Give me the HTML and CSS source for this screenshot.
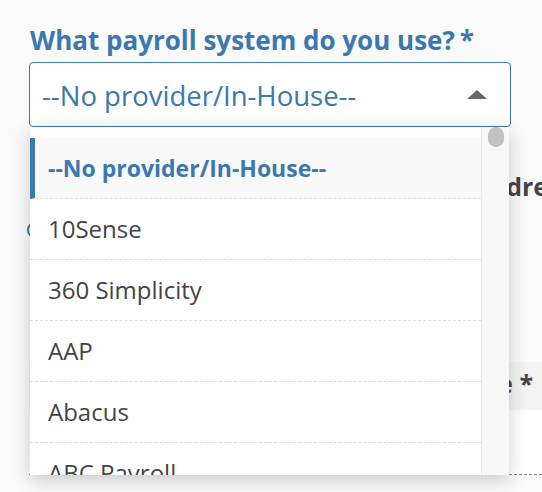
FILE: index.html
```html
<!DOCTYPE html>
<html lang="en">
<head>
    <meta charset="UTF-8">
    <meta name="viewport" content="width=device-width, initial-scale=1.0">
    <title>Payroll system</title>
    <link rel="stylesheet" href="styles.css">
</head>
<body>
    <div class="form">
        <div class="field">
            <label class="label">What payroll system do you use?<span class="req">*</span></label>
            <div class="select">
                <span class="select-value">--No provider/In-House--</span>
                <span class="arrow"></span>
            </div>
        </div>

        <div class="field behind">
            <h3 class="behind-title">Address</h3>
            <div class="radio"></div>
        </div>

        <div class="field behind">
            <label class="behind-label">Phone type <span>*</span></label>
            <div class="behind-input"></div>
        </div>

        <!-- lista aperta sopra il resto del form -->
        <div class="dropdown">
            <ul class="options">
                <li class="option selected">--No provider/In-House--</li>
                <li class="option">10Sense</li>
                <li class="option">360 Simplicity</li>
                <li class="option">AAP</li>
                <li class="option">Abacus</li>
                <li class="option">ABC Payroll</li>
            </ul>
            <div class="scrollbar">
                <div class="thumb"></div>
            </div>
        </div>
    </div>
</body>
</html>
```

FILE: styles.css
```css
html, body {
    overflow: hidden;
}
body {
    margin: 0;
    background-color: #fafafa;
    font-family: "Open Sans", "Noto Sans", sans-serif;
    color: #444;
}
.form {
    position: relative;
    padding: 24px 0 0 29px;
    height: 468px;
}
.label {
    display: block;
    font-size: 26px;
    line-height: 32px;
    font-weight: 700;
    color: #3a78ad;
    margin-left: 1px;
    margin-bottom: 6px;
    white-space: nowrap;
}
.req {
    margin-left: 5px;
}
.select {
    width: 482px;
    height: 65px;
    border: 1px solid #3a78ad;
    border-radius: 4px;
    background-color: #fff;
    display: flex;
    align-items: center;
    justify-content: space-between;
    padding: 0 23px 0 12px;
    box-sizing: border-box;
}
.select-value {
    font-size: 27.5px;
    color: #3a78ad;
    margin-top: 2px;
}
.arrow {
    width: 0;
    height: 0;
    border-left: 10px solid transparent;
    border-right: 10px solid transparent;
    border-bottom: 9px solid #666;
}
.behind {
    display: flex;
    flex-direction: column;
    align-items: flex-end;
}
.behind-title {
    margin: 42px -31px 0 0;
    font-size: 25px;
    line-height: 34px;
    font-weight: 700;
    color: #444;
    white-space: nowrap;
}
.radio {
    align-self: flex-start;
    width: 14px;
    height: 14px;
    border: 2px solid #3a78ad;
    border-radius: 50%;
    margin: 18px 0 0 -2px;
}
.behind-label {
    align-self: stretch;
    text-align: right;
    margin-top: 123px;
    padding: 6px 9px 12px 0;
    font-size: 25px;
    line-height: 30px;
    font-weight: 700;
    white-space: nowrap;
    background-color: #f3f3f3;
}
.behind-input {
    align-self: stretch;
    height: 64px;
    background-color: #fff;
    border-bottom: 1px dashed #888;
}
.dropdown {
    position: absolute;
    top: 127px;
    left: 30px;
    width: 479px;
    height: 348px;
    background-color: #fff;
    display: flex;
    box-shadow: 0 5px 18px rgba(0, 0, 0, 0.2);
    overflow: hidden;
}
.options {
    list-style: none;
    margin: 0;
    padding: 11px 0 0 0;
    flex: 1;
}
.option {
    height: 60px;
    line-height: 60px;
    padding-left: 18px;
    font-size: 24px;
    color: #444;
    border-bottom: 1px dashed #ddd;
}
.option.selected {
    background-color: #f9f9f9;
    border-left: 5px solid #3a78ad;
    padding-left: 13px;
    font-size: 23px;
    font-weight: 700;
    color: #3a78ad;
}
.scrollbar {
    width: 28px;
    background-color: #f8f8f8;
    border-left: 1px solid #ebebeb;
    padding: 0 5px 0 6px;
    box-sizing: border-box;
}
.thumb {
    height: 20px;
    border-radius: 8px;
    background-color: #c1c1c1;
}
```
